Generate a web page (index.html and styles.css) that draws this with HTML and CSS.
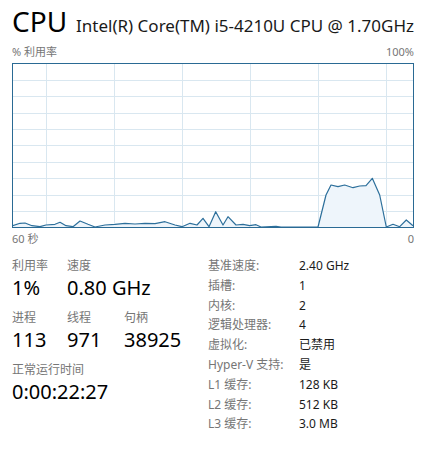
FILE: index.html
```html
<!DOCTYPE html>
<html lang="zh-CN">
<head>
    <meta charset="UTF-8">
    <meta name="viewport" content="width=device-width, initial-scale=1.0">
    <title>CPU</title>
    <link rel="stylesheet" href="styles.css">
</head>
<body>

    <div class="panel">
        <!-- Header -->
        <div class="header">
            <div class="title">CPU</div>
            <div class="model">Intel(R) Core(TM) i5-4210U CPU @ 1.70GHz</div>
        </div>

        <div class="chart-head">
            <span>% 利用率</span>
            <span>100%</span>
        </div>

        <!-- Usage graph, coordinates match the page -->
        <svg class="graph" width="402" height="165" viewBox="12 63 402 165">
            <g class="grid">
                <line x1="12" y1="80.5" x2="413" y2="80.5"/>
                <line x1="12" y1="96.5" x2="413" y2="96.5"/>
                <line x1="12" y1="113.5" x2="413" y2="113.5"/>
                <line x1="12" y1="129.5" x2="413" y2="129.5"/>
                <line x1="12" y1="145.5" x2="413" y2="145.5"/>
                <line x1="12" y1="162.5" x2="413" y2="162.5"/>
                <line x1="12" y1="178.5" x2="413" y2="178.5"/>
                <line x1="12" y1="195.5" x2="413" y2="195.5"/>
                <line x1="12" y1="211.5" x2="413" y2="211.5"/>
                <line x1="46.5" y1="63" x2="46.5" y2="227"/>
                <line x1="114.5" y1="63" x2="114.5" y2="227"/>
                <line x1="182.5" y1="63" x2="182.5" y2="227"/>
                <line x1="250.5" y1="63" x2="250.5" y2="227"/>
                <line x1="318.5" y1="63" x2="318.5" y2="227"/>
                <line x1="386.5" y1="63" x2="386.5" y2="227"/>
            </g>
            <polygon class="area" points="12,226 20,223.3 25,223 32,225.7 40,226.7 46,225 55,224.3 60,222.3 66,225.7 73,226.7 80,221 88,224.3 95,227 105,225 115,224.3 125,223.3 135,224 145,223.3 155,223.7 165,221.7 175,225 182,226.7 190,223.3 197,225 203,218.3 209,226.7 215.7,211.7 223,225 228,216.7 236,225 243,224.3 249.7,225.7 256,224.7 261,227 276,226.3 281,227 318,227 326,195 331,185 338,186.7 344.7,185 353,187.7 359.7,186 366,185.7 372.3,178.3 379.7,195 386.3,227 393,224.3 399.7,226.7 406.3,220 413,225.7 413,227 12,227"/>
            <polyline class="line" points="12,226 20,223.3 25,223 32,225.7 40,226.7 46,225 55,224.3 60,222.3 66,225.7 73,226.7 80,221 88,224.3 95,227 105,225 115,224.3 125,223.3 135,224 145,223.3 155,223.7 165,221.7 175,225 182,226.7 190,223.3 197,225 203,218.3 209,226.7 215.7,211.7 223,225 228,216.7 236,225 243,224.3 249.7,225.7 256,224.7 261,227 276,226.3 281,227 318,227 326,195 331,185 338,186.7 344.7,185 353,187.7 359.7,186 366,185.7 372.3,178.3 379.7,195 386.3,227 393,224.3 399.7,226.7 406.3,220 413,225.7"/>
            <rect class="frame" x="12.5" y="63.5" width="401" height="164"/>
        </svg>

        <div class="chart-foot">
            <span>60 秒</span>
            <span>0</span>
        </div>

        <!-- Stats -->
        <div class="stats">
            <div class="live">
                <div class="stat-row">
                    <div class="stat col-a">
                        <div class="label">利用率</div>
                        <div class="value">1%</div>
                    </div>
                    <div class="stat">
                        <div class="label">速度</div>
                        <div class="value">0.80 GHz</div>
                    </div>
                </div>
                <div class="stat-row">
                    <div class="stat col-a">
                        <div class="label">进程</div>
                        <div class="value">113</div>
                    </div>
                    <div class="stat col-b">
                        <div class="label">线程</div>
                        <div class="value">971</div>
                    </div>
                    <div class="stat">
                        <div class="label">句柄</div>
                        <div class="value">38925</div>
                    </div>
                </div>
                <div class="stat-row">
                    <div class="stat">
                        <div class="label">正常运行时间</div>
                        <div class="value">0:00:22:27</div>
                    </div>
                </div>
            </div>

            <div class="specs">
                <span class="key">基准速度:</span><span class="val">2.40 GHz</span>
                <span class="key">插槽:</span><span class="val">1</span>
                <span class="key">内核:</span><span class="val">2</span>
                <span class="key">逻辑处理器:</span><span class="val">4</span>
                <span class="key">虚拟化:</span><span class="val">已禁用</span>
                <span class="key">Hyper-V 支持:</span><span class="val">是</span>
                <span class="key">L1 缓存:</span><span class="val">128 KB</span>
                <span class="key">L2 缓存:</span><span class="val">512 KB</span>
                <span class="key">L3 缓存:</span><span class="val">3.0 MB</span>
            </div>
        </div>
    </div>

</body>
</html>
```

FILE: styles.css
```css
/* Basic styling */
body {
    margin: 0;
    font-family: "Noto Sans", "Noto Sans CJK SC", sans-serif;
    background-color: #ffffff;
    color: #000;
}
.panel {
    width: 402px;
    padding: 4px 12px 0;
}
.header {
    display: flex;
    align-items: baseline;
    height: 34px;
}
.title {
    font-size: 28px;
    line-height: 34px;
    width: 73px;
}
.model {
    font-size: 17px;
    line-height: 34px;
    color: #1a1a1a;
    white-space: nowrap;
}
.chart-head, .chart-foot {
    display: flex;
    justify-content: space-between;
    font-size: 11px;
    line-height: 14px;
    color: #767676;
}
.chart-head {
    margin-top: 7px;
}
.graph {
    display: block;
    margin-top: 4px;
}
.grid line {
    stroke: #d9e7f0;
    stroke-width: 1;
}
.area {
    fill: #eef5fb;
}
.line {
    fill: none;
    stroke: #2c6f9b;
    stroke-width: 1.2;
    stroke-linejoin: round;
}
.frame {
    fill: none;
    stroke: #2a6a94;
    stroke-width: 1;
}
.chart-foot {
    margin-top: 4px;
}
.stats {
    display: flex;
    margin-top: 10px;
}
.live {
    width: 196px;
    padding-top: 1px;
}
.stat-row {
    display: flex;
    margin-bottom: 8px;
}
.stat {
    white-space: nowrap;
}
.col-a {
    width: 55px;
}
.col-b {
    width: 57px;
}
.label {
    font-size: 12px;
    line-height: 17px;
    color: #767676;
}
.value {
    font-size: 20px;
    line-height: 27px;
    color: #000;
}
.specs {
    display: grid;
    grid-template-columns: 91px auto;
    font-size: 12px;
    line-height: 19.8px;
    white-space: nowrap;
}
.key {
    color: #767676;
}
.val {
    color: #1a1a1a;
}
```
